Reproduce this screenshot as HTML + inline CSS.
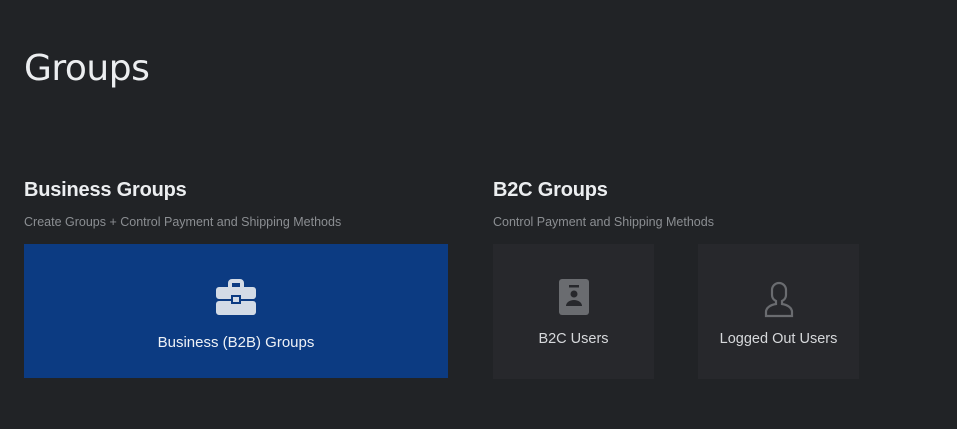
<!DOCTYPE html>
<html><head><style>
body{margin:0;width:957px;height:429px;background:#212326;font-family:"Liberation Sans",sans-serif;position:relative;overflow:hidden}
.a{position:absolute}
h1{position:absolute;left:24px;top:48px;margin:0;font-size:36px;font-weight:normal;color:#eceef0;font-family:"DejaVu Sans","Liberation Sans",sans-serif;letter-spacing:-0.5px}
.h2{font-size:20px;font-weight:bold;color:#eceef0;letter-spacing:-0.2px}
.sub{font-size:12.5px;color:#8b8e92}
.card{position:absolute;top:244px;height:135px;background:#27282c;color:#d6d8db;font-size:14.5px;text-align:center}
</style></head><body>
<h1>Groups</h1>
<div class="a h2" style="left:24px;top:179px">Business Groups</div>
<div class="a sub" style="left:24px;top:215px">Create Groups + Control Payment and Shipping Methods</div>
<div class="a h2" style="left:493px;top:179px">B2C Groups</div>
<div class="a sub" style="left:493px;top:215px">Control Payment and Shipping Methods</div>
<div class="card" style="left:24px;width:424px;height:134px;background:#0c3b82;color:#eef1f6;font-size:15px">
<svg class="a" style="left:192px;top:34px" width="40" height="38" viewBox="0 0 40 38"><path d="M12 9V5a4 4 0 0 1 4-4h8a4 4 0 0 1 4 4v4h-4V5h-8v4z" fill="#d3dbe6"/><rect x="0" y="9" width="40" height="12" rx="3" fill="#d3dbe6"/><rect x="0" y="23" width="40" height="14" rx="3" fill="#d3dbe6"/><rect x="15" y="17" width="10" height="9" fill="#0c3b82"/><rect x="17" y="19" width="6" height="5" fill="#d3dbe6"/></svg>
<div class="a" style="left:0;right:0;top:90px">Business (B2B) Groups</div></div>
<div class="card" style="left:493px;width:161px">
<svg class="a" style="left:66px;top:35px" width="30" height="36" viewBox="0 0 30 36"><rect width="30" height="36" rx="3" fill="#6a6c70"/><rect x="10" y="6" width="10" height="2.5" fill="#27282c"/><circle cx="15" cy="15" r="3.5" fill="#27282c"/><path d="M7 27a8 6 0 0 1 16 0z" fill="#27282c"/></svg>
<div class="a" style="left:0;right:0;top:87px">B2C Users</div></div>
<div class="card" style="left:698px;width:161px">
<svg class="a" style="left:66px;top:37px" width="30" height="37" viewBox="0 0 30 37"><path d="M15 2a7 7 0 0 0-7 7v5c0 3 2 5 4 6v3c-6 1-10 4-10 8v4h26v-4c0-4-4-7-10-8v-3c2-1 4-3 4-6V9a7 7 0 0 0-7-7z" fill="none" stroke="#6a6c70" stroke-width="2.2"/></svg>
<div class="a" style="left:0;right:0;top:87px">Logged Out Users</div></div>
</body></html>
